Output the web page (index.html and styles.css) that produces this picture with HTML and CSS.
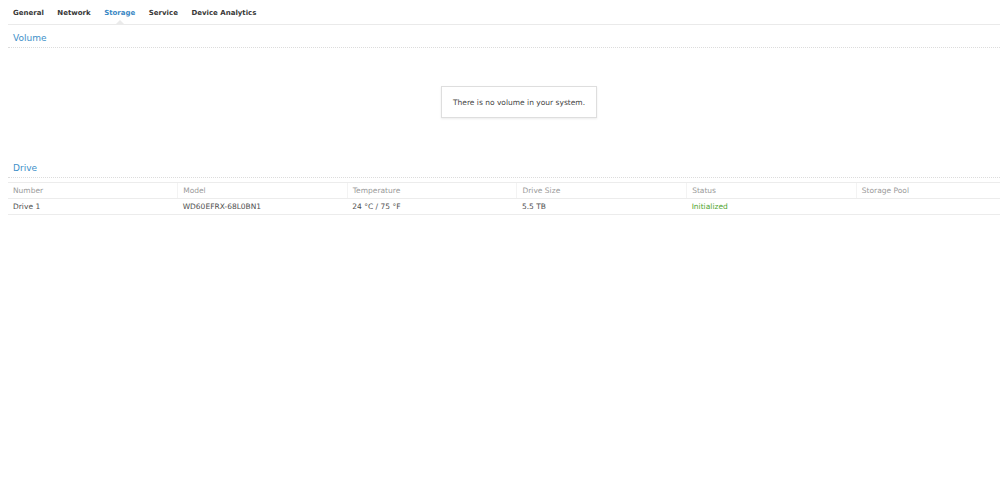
FILE: index.html
```html
<!DOCTYPE html>
<html lang="en">
<head>
  <meta charset="UTF-8" />
  <title>Storage</title>
  <link rel="stylesheet" href="styles.css">
</head>
<body>
  <div class="tabs">
    <span class="tab">General</span>
    <span class="tab">Network</span>
    <span class="tab active">Storage</span>
    <span class="tab">Service</span>
    <span class="tab">Device Analytics</span>
  </div>

  <div class="section">
    <div class="section-title">Volume</div>
    <div class="empty">
      <div class="empty-box">There is no volume in your system.</div>
    </div>
  </div>

  <div class="section">
    <div class="section-title">Drive</div>
    <table class="grid">
      <thead>
        <tr>
          <th>Number</th>
          <th>Model</th>
          <th>Temperature</th>
          <th>Drive Size</th>
          <th>Status</th>
          <th>Storage Pool</th>
        </tr>
      </thead>
      <tbody>
        <tr>
          <td>Drive 1</td>
          <td>WD60EFRX-68L0BN1</td>
          <td>24 °C / 75 °F</td>
          <td>5.5 TB</td>
          <td class="ok">Initialized</td>
          <td></td>
        </tr>
      </tbody>
    </table>
  </div>
</body>
</html>
```

FILE: styles.css
```css
body {
  margin: 0;
  padding: 0 0 0 8px;
  font-family: "DejaVu Sans", Verdana, sans-serif;
  font-size: 7.5px;
  color: #505050;
  background-color: white;
  overflow: hidden;
}
.tabs {
  display: flex;
  gap: 13.5px;
  height: 25px;
  align-items: center;
  padding: 2px 0 0 5px;
  border-bottom: 1px solid #eaeaea;
  box-sizing: border-box;
}
.tab {
  position: relative;
  font-weight: bold;
  font-size: 7px;
  color: #383838;
}
.tab.active {
  color: #3a87c4;
}
.tab.active::after {
  content: "";
  position: absolute;
  left: 50%;
  bottom: -7px;
  margin-left: -4px;
  border-left: 4px solid transparent;
  border-right: 4px solid transparent;
  border-bottom: 4px solid #eaeaea;
}
.section-title {
  color: #3d8fc9;
  font-size: 9px;
  line-height: 11px;
  padding: 8px 0 3px 5px;
  border-bottom: 1px dotted #dcdcdc;
}
.empty {
  height: 107px;
  display: flex;
  justify-content: center;
  padding-top: 38px;
  box-sizing: border-box;
}
.empty-box {
  width: 156px;
  height: 32px;
  box-sizing: border-box;
  border: 1px solid #dedede;
  box-shadow: 0 1px 2px rgba(0, 0, 0, 0.08);
  display: flex;
  align-items: center;
  justify-content: center;
  color: #444;
  margin-left: 30px;
}
.grid {
  width: 1018px;
  border-collapse: collapse;
  table-layout: fixed;
  margin-top: 4px;
}
.grid th,
.grid td {
  text-align: left;
  font-weight: normal;
  padding: 0 5px;
  height: 16px;
  box-sizing: border-box;
  border-bottom: 1px solid #ececec;
}
.grid th {
  color: #9a9a9a;
  border-top: 1px solid #ececec;
  border-left: 1px solid #f3f3f3;
}
.grid th:first-child {
  border-left: none;
}
.grid td.ok {
  color: #4fa530;
}
```
